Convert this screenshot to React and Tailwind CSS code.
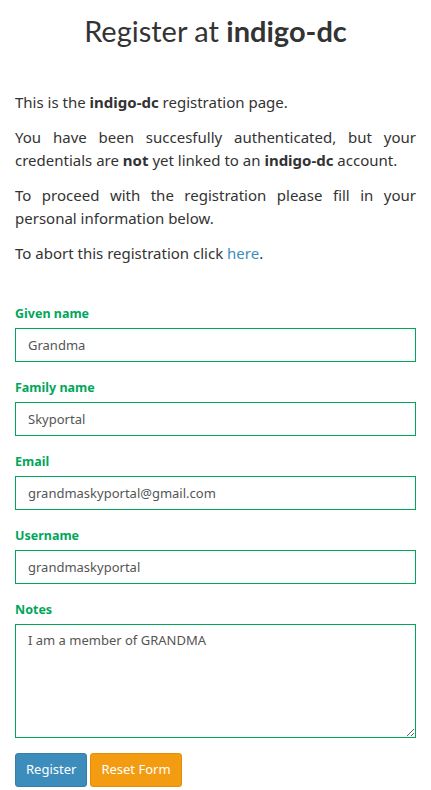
export default function App() {
  const field = "w-full h-[34px] border border-[#00a65a] px-3 text-[13px] text-[#555] bg-white outline-none";
  const label = "block text-[12.5px] leading-[19px] font-bold text-[#00a65a] mb-[5px]";
  return (
    <div className="min-h-screen bg-white text-[#333] px-[15px]" style={{ fontFamily: '"Noto Sans", sans-serif' }}>
      <h1 className="text-center text-[29px] pt-[13px] leading-[36px] text-[#333]" style={{ fontFamily: 'Lato, sans-serif' }}>
        Register at <b>indigo-dc</b>
      </h1>
      <div className="mt-[42px] text-[15px] leading-[23px] text-justify">
        <p className="mb-[12px]">This is the <b>indigo-dc</b> registration page.</p>
        <p className="mb-[12px]">You have been succesfully authenticated, but your credentials are <b>not</b> yet linked to an <b>indigo-dc</b> account.</p>
        <p className="mb-[12px]">To proceed with the registration please fill in your personal information below.</p>
        <p>To abort this registration click <a className="text-[#3c8dbc]" href="#">here</a>.</p>
      </div>
      <form className="mt-[39px] flex flex-col gap-[16px]">
        <div>
          <label className={label}>Given name</label>
          <input className={field} defaultValue="Grandma" />
        </div>
        <div>
          <label className={label}>Family name</label>
          <input className={field} defaultValue="Skyportal" />
        </div>
        <div>
          <label className={label}>Email</label>
          <input className={field} defaultValue="grandmaskyportal@gmail.com" />
        </div>
        <div>
          <label className={label}>Username</label>
          <input className={field} defaultValue="grandmaskyportal" />
        </div>
        <div>
          <label className={label}>Notes</label>
          <textarea className="block w-full h-[114px] border border-[#00a65a] px-3 py-[6px] text-[13px] text-[#555] bg-white outline-none" defaultValue="I am a member of GRANDMA" />
        </div>
        <div className="flex gap-[3px] -mt-px">
          <button type="button" className="h-[34px] px-[10px] rounded-[3px] bg-[#3c8dbc] border border-[#367fa9] text-white text-[13px]">Register</button>
          <button type="button" className="h-[34px] px-[10px] rounded-[3px] bg-[#f39c12] border border-[#e08e0b] text-white text-[13px]">Reset Form</button>
        </div>
      </form>
    </div>
  );
}
